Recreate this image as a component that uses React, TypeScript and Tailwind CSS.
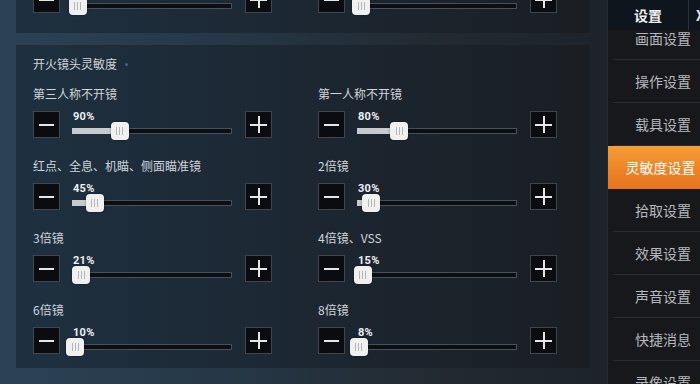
import React from "react";

const FONT = '"Noto Sans CJK SC", "Noto Sans", Roboto, sans-serif';

function MinusBtn() {
  return (
    <div className="w-[27px] h-[27px] shrink-0 bg-[#0a0c0f] border border-[#3f464e] flex items-center justify-center">
      <div className="w-[15px] h-[2px] bg-[#e4e6e8]" />
    </div>
  );
}

function PlusBtn() {
  return (
    <div className="w-[27px] h-[27px] shrink-0 bg-[#0a0c0f] border border-[#3f464e] flex items-center justify-center relative">
      <div className="w-[17px] h-[2px] bg-[#e4e6e8]" />
      <div className="absolute w-[2px] h-[17px] bg-[#e4e6e8]" />
    </div>
  );
}

function Slider({ pct, hidePct }: { pct: number; hidePct?: boolean }) {
  const left = 0.56 * pct - 11.5;
  return (
    <div className="w-[160px] ml-[12px] flex flex-col">
      <div
        className="h-[11px] text-[11px] leading-[11px] font-bold text-[#eef0f2] pl-[1px] tracking-[0.3px]"
        style={{ fontFamily: 'Roboto, "Noto Sans", sans-serif' }}
      >
        {hidePct ? null : `${pct}%`}
      </div>
      <div className="relative h-[18px]">
        <div className="absolute left-0 right-0 top-[6px] h-[6px] bg-[#0b0e12] border border-[#4a5057]" />
        <div
          className="absolute left-0 top-[6px] h-[6px] bg-[#c6c9cd]"
          style={{ width: Math.max(0, left + 9) }}
        />
        <div
          className="absolute top-0 h-[18px] w-[18px] rounded-[4px] bg-[#f0f0f0] flex items-center justify-center gap-[2px] shadow-[0_0_2px_rgba(0,0,0,0.5)]"
          style={{ left }}
        >
          <div className="w-[1px] h-[8px] bg-[#b4b6b8]" />
          <div className="w-[1px] h-[8px] bg-[#b4b6b8]" />
          <div className="w-[1px] h-[8px] bg-[#b4b6b8]" />
        </div>
      </div>
    </div>
  );
}

function Control({ label, pct, hidePct }: { label: string; pct: number; hidePct?: boolean }) {
  return (
    <div className="flex flex-col">
      <div className="h-[16px] leading-[16px] text-[12px] text-[#d0d5da] mb-[9px] whitespace-nowrap">
        {label}
      </div>
      <div className="flex items-start h-[29px]">
        <MinusBtn />
        <Slider pct={pct} hidePct={hidePct} />
        <div className="ml-[13px]">
          <PlusBtn />
        </div>
      </div>
    </div>
  );
}

const rows: [string, number, string, number][] = [
  ["第三人称不开镜", 90, "第一人称不开镜", 80],
  ["红点、全息、机瞄、侧面瞄准镜", 45, "2倍镜", 30],
  ["3倍镜", 21, "4倍镜、VSS", 15],
  ["6倍镜", 10, "8倍镜", 8],
];

const menu = [
  "画面设置",
  "操作设置",
  "载具设置",
  "灵敏度设置",
  "拾取设置",
  "效果设置",
  "声音设置",
  "快捷消息",
  "录像设置",
];

export default function App() {
  return (
    <div
      className="w-[700px] h-[384px] overflow-hidden flex bg-[#1b1d21]"
      style={{ fontFamily: FONT }}
    >
      {/* main area */}
      <div className="w-[607px] h-[384px] shrink-0 flex flex-col pl-[16px] pr-[17px] bg-[linear-gradient(90deg,#2c4254_0%,#263848_35%,#22292f_75%,#1d232a_100%)] overflow-hidden">
        {/* previous card (partial) */}
        <div className="mt-[-51px] pt-[12px] pb-[18px] pl-[17px] bg-[linear-gradient(90deg,#1e3040_0%,#1c2732_50%,#1a1e23_100%)] grid grid-cols-[285px_285px]">
          <Control label="" pct={15} hidePct />
          <Control label="" pct={12} hidePct />
        </div>
        {/* sensitivity card */}
        <div className="mt-[12px] pt-[11px] pb-[12px] pl-[17px] bg-[linear-gradient(90deg,#1e3040_0%,#1c2732_50%,#1a1e23_100%)] flex flex-col">
          <div className="flex items-center h-[16px] mb-[14px]">
            <span className="text-[12px] leading-[16px] text-[#d0d5da]">开火镜头灵敏度</span>
            <span className="ml-[8px] w-[3px] h-[3px] rounded-full bg-[#4d6374]" />
          </div>
          <div className="flex flex-col gap-[18px]">
            {rows.map(([l1, p1, l2, p2]) => (
              <div key={l1} className="grid grid-cols-[285px_285px]">
                <Control label={l1} pct={p1} />
                <Control label={l2} pct={p2} />
              </div>
            ))}
          </div>
        </div>
      </div>

      {/* sidebar */}
      <div className="w-[93px] h-[384px] shrink-0 flex flex-col bg-[#17181b] border-l border-[#262d35]">
        <div className="h-[30px] shrink-0 flex bg-[#0f151c] relative z-10">
          <div className="w-[80px] flex items-center justify-center text-[14px] font-bold text-[#eef0f2]">
            设置
          </div>
          <div className="flex-1 border-l border-[#2a323b] pl-[5px] flex items-center text-[14px] font-bold text-[#e8eaec] overflow-hidden">
            <span className="ml-[2px]">X</span>
          </div>
        </div>
        <div className="flex-1 overflow-hidden">
          <div className="mt-[-13px] flex flex-col">
            {menu.map((m) => {
              const active = m === "灵敏度设置";
              return (
                <div
                  key={m}
                  className={
                    active
                      ? "h-[43px] shrink-0 flex items-center justify-center pl-[18px] text-[14px] text-white bg-[linear-gradient(180deg,#f59d38_0%,#ee8628_50%,#e7741d_100%)] whitespace-nowrap"
                      : "h-[43px] shrink-0 flex items-center justify-center pl-[18px] text-[14px] text-[#b6b9bd] border-b border-[#2a2c31] ml-[5px] whitespace-nowrap"
                  }
                >
                  <span className="ml-[-5px]">{m}</span>
                </div>
              );
            })}
          </div>
        </div>
      </div>
    </div>
  );
}
